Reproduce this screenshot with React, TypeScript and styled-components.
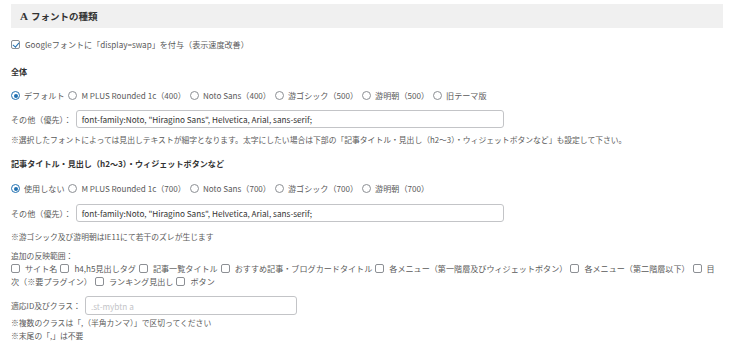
import { createGlobalStyle } from "styled-components"
import styled from "styled-components"

const Global = createGlobalStyle`
  html, body {
    margin: 0;
    padding: 0;
    background: #fff;
  }
  body {
    font-family: "Noto Sans CJK JP", sans-serif;
    font-size: 8.1px;
    color: #5a5a5a;
  }
`

const Page = styled.div`
  width: 712px;
  padding: 4px 0 0 11px;
`

const Header = styled.div`
  height: 24px;
  background: #f0f0f0;
  display: flex;
  align-items: center;
  padding-left: 9px;
  font-size: 9.5px;
  font-weight: 700;
  color: #333;
`

const Serif = styled.span`
  font-family: "Liberation Serif", serif;
  font-size: 11px;
  margin-right: 3px;
`

const Line = styled.div<{ $mt: number }>`
  margin-top: ${p => p.$mt}px;
  line-height: 13px;
  display: flex;
  align-items: center;
  white-space: nowrap;
`

const Label = styled.div<{ $mt: number }>`
  margin-top: ${p => p.$mt}px;
  line-height: 13px;
  font-weight: 700;
  color: #333;
`

const Note = styled.div<{ $mt: number }>`
  margin-top: ${p => p.$mt}px;
  line-height: 13px;
  font-size: 7.8px;
`

const Box = styled.span<{ $checked?: boolean }>`
  display: inline-block;
  box-sizing: border-box;
  width: 9px;
  height: 9px;
  border: 1px solid #8c8f94;
  border-radius: 2px;
  background: #fff;
  vertical-align: -1px;
  margin-right: 5px;
  position: relative;
  flex: none;
  ${p => p.$checked && `
    &::after {
      content: "";
      position: absolute;
      left: 2px;
      top: 0px;
      width: 2.5px;
      height: 5px;
      border: solid #2271b1;
      border-width: 0 1.5px 1.5px 0;
      transform: rotate(40deg);
    }
  `}
`

const Radio = styled.span<{ $checked?: boolean }>`
  display: inline-block;
  box-sizing: border-box;
  width: 9px;
  height: 9px;
  border: 1px solid #8c8f94;
  border-radius: 50%;
  background: #fff;
  margin-right: 4px;
  position: relative;
  flex: none;
  ${p => p.$checked && `
    border-color: #2271b1;
    &::after {
      content: "";
      position: absolute;
      left: 1.5px;
      top: 1.5px;
      width: 4px;
      height: 4px;
      border-radius: 50%;
      background: #2271b1;
    }
  `}
`

const Option = styled.span`
  display: inline-flex;
  align-items: center;
  margin-right: 4px;
`

const InputRow = styled.div<{ $mt: number }>`
  margin-top: ${p => p.$mt}px;
  display: flex;
  align-items: center;
`

const Field = styled.div<{ $w: number; $h: number; $ph?: boolean }>`
  box-sizing: border-box;
  width: ${p => p.$w}px;
  height: ${p => p.$h}px;
  border: 1px solid #c3c4c7;
  border-radius: 3px;
  display: flex;
  align-items: center;
  padding-left: 5px;
  margin-left: 4px;
  font-size: 8.2px;
  color: ${p => (p.$ph ? "#c3c4c7" : "#333")};
`

const SmallLabel = styled.span`
  font-size: 7.8px;
`

const Flow = styled.div`
  line-height: 13px;
  width: 707px;
`

const Item = styled.span`
  margin-right: 3px;
`

const fonts1 = ["デフォルト", "M PLUS Rounded 1c（400）", "Noto Sans（400）", "游ゴシック（500）", "游明朝（500）", "旧テーマ版"]
const fonts2 = ["使用しない", "M PLUS Rounded 1c（700）", "Noto Sans（700）", "游ゴシック（700）", "游明朝（700）"]
const targets = [
  "サイト名",
  "h4,h5見出しタグ",
  "記事一覧タイトル",
  "おすすめ記事・ブログカードタイトル",
  "各メニュー（第一階層及びウィジェットボタン）",
  "各メニュー（第二階層以下）",
  "目次（※要プラグイン）",
  "ランキング見出し",
  "ボタン",
]

const FAMILY = `font-family:Noto, "Hiragino Sans", Helvetica, Arial, sans-serif;`

export default function App() {
  return (
    <>
      <Global />
      <Page>
        <Header>
          <Serif>A</Serif>フォントの種類
        </Header>

        <Line $mt={10}>
          <Box $checked />
          Googleフォントに「display=swap」を付与（表示速度改善）
        </Line>

        <Label $mt={14}>全体</Label>
        <Line $mt={11}>
          {fonts1.map((f, i) => (
            <Option key={f}>
              <Radio $checked={i === 0} />
              {f}
            </Option>
          ))}
        </Line>
        <InputRow $mt={8}>
          その他（優先）：
          <Field $w={428} $h={18}>{FAMILY}</Field>
        </InputRow>
        <Note $mt={5}>
          ※選択したフォントによっては見出しテキストが細字となります。太字にしたい場合は下部の「記事タイトル・見出し（h2〜3）・ウィジェットボタンなど」も設定して下さい。
        </Note>

        <Label $mt={11}>記事タイトル・見出し（h2〜3）・ウィジェットボタンなど</Label>
        <Line $mt={12}>
          {fonts2.map((f, i) => (
            <Option key={f}>
              <Radio $checked={i === 0} />
              {f}
            </Option>
          ))}
        </Line>
        <InputRow $mt={9}>
          その他（優先）：
          <Field $w={428} $h={18}>{FAMILY}</Field>
        </InputRow>
        <Note $mt={8}>※游ゴシック及び游明朝はIE11にて若干のズレが生じます</Note>

        <Note $mt={6}>追加の反映範囲：</Note>
        <Flow>
          {targets.map(t => (
            <Item key={t}>
              <Box />
              {t}
            </Item>
          ))}
        </Flow>

        <InputRow $mt={8}>
          <SmallLabel>適応ID及びクラス：</SmallLabel>
          <Field $w={212} $h={19} $ph>.st-mybtn a</Field>
        </InputRow>
        <Note $mt={1}>※複数のクラスは「,（半角カンマ）」で区切ってください</Note>
        <Note $mt={0}>※末尾の「,」は不要</Note>
      </Page>
    </>
  )
}
